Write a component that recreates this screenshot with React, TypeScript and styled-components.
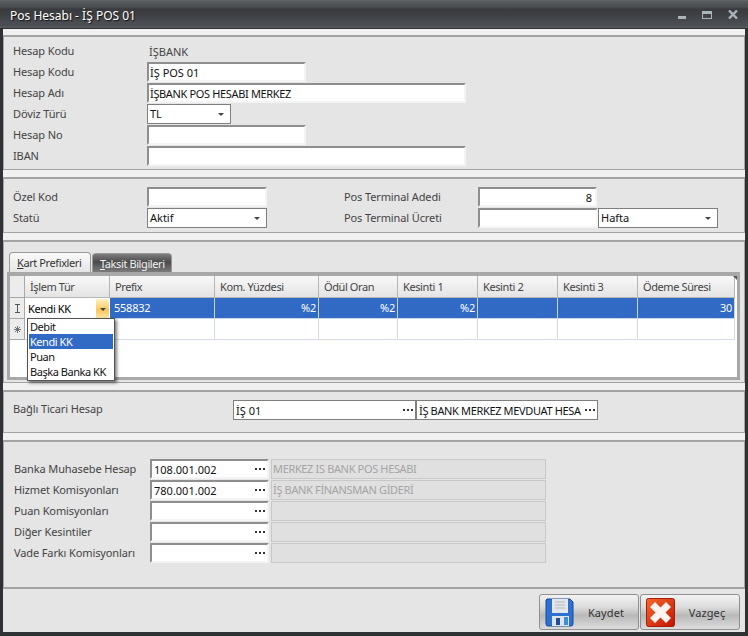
import React from "react";
import styled, { createGlobalStyle } from "styled-components";

const Global = createGlobalStyle`
  * { box-sizing: border-box; }
  html, body { margin: 0; padding: 0; width: 748px; height: 636px; overflow: hidden; background: #333; }
  body { font-family: "Noto Sans", "Liberation Sans", sans-serif; font-size: 11px; color: #000; }
`;

const Window = styled.div`
  width: 748px; height: 636px; display: flex; flex-direction: column;
  background: #2f3133;
  padding: 0 3px 4px 3px;
`;
const TitleBar = styled.div`
  height: 28px; margin: 0 -3px; padding: 0 10px 0 10px;
  display: flex; align-items: center; justify-content: space-between; flex-shrink: 0;
  background: linear-gradient(#64676a 0, #55585b 2px, #4a4c4f 7px, #393b3e 9px, #3d3f42 14px, #4d5155 26px, #55595c 27px);
`;
const Title = styled.div`
  color: #fff; font-size: 12px; margin-top: 2px; text-shadow: 1px 1px 1px #111;
`;
const Controls = styled.div`display: flex; align-items: flex-end; gap: 16px; margin-top: 1px;`;
const Body = styled.div`
  flex: 1; background: #f0f0f0; padding-top: 6px; display: flex; flex-direction: column; margin-top: 1px; gap: 7px; min-height: 0;
`;
const Panel = styled.section<{ $h: number; $pl?: number }>`
  height: ${p => p.$h}px; flex-shrink: 0; background: #e5e5e5;
  border: 1px solid #a3a3a3; border-top-width: 2px;
  padding-left: ${p => p.$pl ?? 9}px;
  display: flex; flex-direction: column;
`;
const Rows = styled.div<{ $top: number }>`
  display: flex; flex-direction: column; gap: 1px; padding-top: ${p => p.$top}px;
`;
const Row = styled.div`display: flex; align-items: center; height: 20px;`;
const Label = styled.label<{ $w: number; $up?: number }>`
  width: ${p => p.$w}px; flex-shrink: 0; color: #444; font-size: 11px; letter-spacing: -0.12px; white-space: nowrap; position: relative; top: ${p => -(p.$up ?? 1)}px;
`;
const Static = styled.span`color: #444; font-size: 11px; margin-left: 2px;`;
const Input = styled.div<{ $w: number; $right?: boolean; $caps?: boolean }>`
  width: ${p => p.$w}px; height: 20px; flex-shrink: 0; background: #fff;
  border: 2px solid; border-color: #8e8e8e #f4f4f4 #f4f4f4 #8e8e8e;
  padding-left: 1px; padding-right: 3px; line-height: 17px; font-size: 11px; color: #111; white-space: nowrap; overflow: hidden;
  letter-spacing: ${p => (p.$caps ? "-0.35px" : "0")};
  text-align: ${p => (p.$right ? "right" : "left")};
`;
const SelectBox = styled.div<{ $w: number }>`
  width: ${p => p.$w}px; height: 20px; flex-shrink: 0; background: #fff; border: 1px solid #7f7f7f;
  display: flex; align-items: center; justify-content: space-between; padding: 0 6px 1px 2px; font-size: 11px; color: #111;
`;
const Arrow = styled.span`
  width: 0; height: 0; border-left: 3px solid transparent; border-right: 3px solid transparent; border-top: 3px solid #444; margin-top: 1px;
`;
const TwoCols = styled.div`display: flex; padding-top: 8px;`;
const Column = styled.div<{ $w: number }>`width: ${p => p.$w}px; display: flex; flex-direction: column; gap: 1px;`;
const Tabs = styled.div`display: flex; padding: 10px 0 0 0; height: 30px; align-items: flex-end; gap: 1px;`;
const Tab = styled.div<{ $active?: boolean }>`
  height: ${p => (p.$active ? 20 : 19)}px; padding: 0 7px; display: flex; align-items: center; font-size: 11px; letter-spacing: -0.4px;
  border: 1px solid #999; border-bottom: 0; border-radius: 4px 4px 0 0;
  width: ${p => (p.$active ? 82 : 80)}px; white-space: nowrap;
  color: ${p => (p.$active ? "#333" : "#f2f2f2")};
  background: ${p => (p.$active ? "linear-gradient(#fafafa,#e5e5e5)" : "linear-gradient(#7d7d7d,#4b4b4b 45%,#7c7c7c)")};
  u { text-underline-offset: 1px; }
`;
const GridFrame = styled.div`
  margin: 0 0 0 -2px; width: 733px; height: 108px; border: 3px solid #a8a8a8; border-top-width: 4px; background: #fff; position: relative; display: flex; flex-direction: column;
`;
const GridRow = styled.div<{ $h: number }>`display: flex; height: ${p => p.$h}px; flex-shrink: 0;`;
const Indicator = styled.div`
  width: 15px; flex-shrink: 0; background: #ececec; border-right: 1px solid #a8a8a8; border-bottom: 1px solid #a8a8a8; display: flex; align-items: center; justify-content: center;
`;
const HeaderCell = styled.div<{ $w: number }>`
  width: ${p => p.$w}px; flex-shrink: 0; padding-left: 5px; display: flex; align-items: center; font-size: 11px; letter-spacing: -0.4px; color: #444;
  background: linear-gradient(#f8f8f8,#e4e4e4); border-right: 1px solid #b5b5b5; border-bottom: 1px solid #b5b5b5;
`;
const Cell = styled.div<{ $w: number; $sel?: boolean }>`
  width: ${p => p.$w}px; flex-shrink: 0; padding: 0 2px 1px 4px; display: flex; align-items: center; font-size: 11px; letter-spacing: -0.25px;
  justify-content: space-between;
  background: ${p => (p.$sel ? "#316ac5" : "#fff")}; color: ${p => (p.$sel ? "#fff" : "#111")};
  border-right: 1px solid ${p => (p.$sel ? "#c9d6ea" : "#d4dbe6")}; border-bottom: 1px solid ${p => (p.$sel ? "#c9d6ea" : "#d4dbe6")};
`;
const NumCell = styled(Cell)`justify-content: flex-end;`;
const EditCell = styled.div<{ $w: number }>`
  width: ${p => p.$w}px; flex-shrink: 0; background: #fff; display: flex; align-items: center; justify-content: space-between; padding: 0 1px 0 3px; font-size: 11px; letter-spacing: -0.4px;
`;
const EditBtn = styled.span`
  width: 13px; height: 20px; background: linear-gradient(#fff3c4,#f9c65a 55%,#fde9a8); display: flex; align-items: center; justify-content: center;
`;
const Corner = styled.span`
  position: absolute; right: 0; top: 0; width: 0; height: 0; border-top: 4px solid #555; border-left: 4px solid transparent;
`;
const Popup = styled.ul`
  position: absolute; left: 17px; top: 42px; width: 88px; height: 63px; margin: 0; padding: 0 1px; list-style: none; background: #fff; border: 1px solid #555;
  box-shadow: 2px 2px 3px rgba(0,0,0,.5); font-size: 11px;
`;
const PopupItem = styled.li<{ $sel?: boolean }>`
  height: 15px; line-height: 15px; padding-left: 1px; letter-spacing: -0.45px; white-space: nowrap;
  background: ${p => (p.$sel ? "#316ac5" : "transparent")}; color: ${p => (p.$sel ? "#fff" : "#111")};
`;
const LookupBox = styled.div<{ $w: number; $inset?: boolean }>`
  width: ${p => p.$w}px; height: 20px; flex-shrink: 0; background: #fff; display: flex; align-items: center; justify-content: space-between;
  padding: 0 2px 0 2px; font-size: 11px; color: #111; white-space: nowrap; overflow: hidden;
  ${p => (p.$inset
    ? "border: 2px solid; border-color: #8e8e8e #f4f4f4 #f4f4f4 #8e8e8e;"
    : "border: 1px solid #7f7f7f;")}
`;
const Clip = styled.span<{ $caps?: boolean }>`overflow: hidden; flex: 1; letter-spacing: ${p => (p.$caps ? "-0.35px" : "0")};`;
const DotsSvg = styled.svg`flex-shrink: 0; margin-left: 2px;`;
const GrayBox = styled.div`
  width: 275px; height: 20px; margin-left: 2px; flex-shrink: 0; background: #e0e0e0; border: 1px solid #c8c8c8; color: #a4a4a4; padding-left: 1px; line-height: 18px; font-size: 11px; white-space: nowrap; letter-spacing: -0.35px;
`;
const Footer = styled.div`
  flex: 1; display: flex; justify-content: flex-end; align-items: flex-start; gap: 1px; padding: 5px 5px 0 0; background: #e5e5e5; margin-top: -7px; border-top: 1px solid #a3a3a3;
`;
const Button = styled.button`
  width: 100px; height: 36px; padding: 0 0 0 5px; display: flex; align-items: center; border: 1px solid #8f8f8f; border-radius: 3px; font: inherit; color: #333; letter-spacing: 0.1px;
  background: linear-gradient(#f3f3f3,#dcdcdc 35%,#b9b9b9 60%,#dcdcdc);
`;
const ButtonText = styled.span`flex: 1; text-align: center;`;

const Minimize = () => <svg width="8" height="3" viewBox="0 0 8 3"><rect width="8" height="3" fill="#aab4bb" /></svg>;
const Maximize = () => <svg width="10" height="8" viewBox="0 0 10 8"><path d="M0 0h10v8H0zM1 3v4h8V3z" fill="#aab4bb" fillRule="evenodd" /></svg>;
const Close = () => <svg width="10" height="9" viewBox="0 0 10 9"><path d="M1 .5 9 8.5M9 .5 1 8.5" stroke="#aab4bb" strokeWidth="2.4" fill="none" /></svg>;
const Dots = () => <DotsSvg width="10" height="2" viewBox="0 0 10 2"><path d="M0 0h2v2H0zM4 0h2v2H4zM8 0h2v2H8z" fill="#333" /></DotsSvg>;
const IBeam = () => <svg width="7" height="9" viewBox="0 0 7 9"><path d="M1 .5h5M1 8.5h5M3.5 .5v8" stroke="#555" fill="none" /></svg>;
const Star = () => <svg width="7" height="7" viewBox="0 0 7 7"><path d="M3.5 0v7M0 3.5h7M1 1l5 5M6 1 1 6" stroke="#666" strokeWidth=".9" fill="none" /></svg>;

const Floppy = () => (
  <svg width="29" height="29" viewBox="0 0 29 29">
    <path d="M2 1h23l3 3v22a2 2 0 0 1-2 2H3a2 2 0 0 1-2-2V2z" fill="#2f6fd0" stroke="#1b4a9a" />
    <rect x="7" y="1" width="16" height="14" fill="#e3e6ea" />
    <path d="M10 4h10M10 7h10M10 10h10" stroke="#b2b7bd" strokeWidth="1.2" />
    <rect x="7" y="18" width="17" height="10" fill="#dfe4ea" />
    <rect x="11" y="20" width="4" height="7" fill="#234e9a" />
    <rect x="19" y="19" width="4" height="8" fill="#3a8fd8" />
  </svg>
);
const CancelIcon = () => (
  <svg width="29" height="29" viewBox="0 0 29 29">
    <defs><linearGradient id="cg" x1="0" y1="0" x2="1" y2="1"><stop offset="0" stopColor="#f66a2a" /><stop offset="1" stopColor="#c01208" /></linearGradient></defs>
    <rect x=".5" y=".5" width="28" height="28" rx="2" fill="url(#cg)" stroke="#a81c08" />
    <path d="M9 4 14.5 9.5 20 4 25 9 19.5 14.5 25 20 20 25 14.5 19.5 9 25 4 20 9.5 14.5 4 9z" fill="#fbf3ee" />
  </svg>
);

const cols: [string, number][] = [["İşlem Tür", 85], ["Prefix", 105], ["Kom. Yüzdesi", 104], ["Ödül Oran", 79], ["Kesinti 1", 80], ["Kesinti 2", 80], ["Kesinti 3", 80], ["Ödeme Süresi", 97]];
const values = ["", "558832", "%2", "%2", "%2", "", "", "30"];
const accounts = [
  ["Banka Muhasebe Hesap", "108.001.002", "MERKEZ IS BANK POS HESABI"],
  ["Hizmet Komisyonları", "780.001.002", "İŞ BANK FİNANSMAN GİDERİ"],
  ["Puan Komisyonları", "", ""],
  ["Diğer Kesintiler", "", ""],
  ["Vade Farkı Komisyonları", "", ""],
];

export default function App() {
  return (
    <Window>
      <Global />
      <TitleBar>
        <Title>Pos Hesabı - İŞ POS 01</Title>
        <Controls><Minimize /><Maximize /><Close /></Controls>
      </TitleBar>
      <Body>
        <Panel $h={135}>
          <Rows $top={4}>
            <Row><Label $w={134}>Hesap Kodu</Label><Static>İŞBANK</Static></Row>
            <Row><Label $w={134}>Hesap Kodu</Label><Input $w={159}>İŞ POS 01</Input></Row>
            <Row><Label $w={134}>Hesap Adı</Label><Input $w={319} $caps>İŞBANK POS HESABI MERKEZ</Input></Row>
            <Row><Label $w={134}>Döviz Türü</Label><SelectBox $w={84}>TL<Arrow /></SelectBox></Row>
            <Row><Label $w={134}>Hesap No</Label><Input $w={159} /></Row>
            <Row><Label $w={134}>IBAN</Label><Input $w={319} /></Row>
          </Rows>
        </Panel>
        <Panel $h={56}>
          <TwoCols>
            <Column $w={331}>
              <Row><Label $w={134}>Özel Kod</Label><Input $w={120} /></Row>
              <Row><Label $w={134}>Statü</Label><SelectBox $w={120}>Aktif<Arrow /></SelectBox></Row>
            </Column>
            <Column $w={380}>
              <Row><Label $w={134}>Pos Terminal Adedi</Label><Input $w={119} $right>8</Input></Row>
              <Row><Label $w={134}>Pos Terminal Ücreti</Label><Input $w={120} /><SelectBox $w={120}>Hafta<Arrow /></SelectBox></Row>
            </Column>
          </TwoCols>
        </Panel>
        <Panel $h={143} $pl={5}>
          <Tabs>
            <Tab $active><span><u>K</u>art Prefixleri</span></Tab>
            <Tab><span><u>T</u>aksit Bilgileri</span></Tab>
          </Tabs>
          <GridFrame>
            <Corner />
            <GridRow $h={22}>
              <Indicator />
              {cols.map(([t, w]) => <HeaderCell key={t} $w={w}>{t}</HeaderCell>)}
            </GridRow>
            <GridRow $h={21}>
              <Indicator><IBeam /></Indicator>
              {cols.map(([t, w], i) => {
                if (i === 0) return (
                  <EditCell key={t} $w={w}>Kendi KK<EditBtn><Arrow /></EditBtn></EditCell>
                );
                const v = values[i];
                return i === 1 ? <Cell key={t} $w={w} $sel>{v}</Cell> : <NumCell key={t} $w={w} $sel>{v}</NumCell>;
              })}
            </GridRow>
            <GridRow $h={21}>
              <Indicator><Star /></Indicator>
              {cols.map(([t, w]) => <Cell key={t} $w={w} />)}
            </GridRow>
            <Popup>
              <PopupItem>Debit</PopupItem>
              <PopupItem $sel>Kendi KK</PopupItem>
              <PopupItem>Puan</PopupItem>
              <PopupItem>Başka Banka KK</PopupItem>
            </Popup>
          </GridFrame>
        </Panel>
        <Panel $h={43}>
          <Rows $top={8}>
            <Row>
              <Label $w={220} $up={2}>Bağlı Ticari Hesap</Label>
              <LookupBox $w={183}><Clip>İŞ 01</Clip><Dots /></LookupBox>
              <LookupBox $w={182}><Clip $caps>İŞ BANK MERKEZ MEVDUAT HESA</Clip><Dots /></LookupBox>
            </Row>
          </Rows>
        </Panel>
        <Panel $h={148} $pl={10}>
          <Rows $top={17}>
            {accounts.map(([l, c, n]) => (
              <Row key={l}>
                <Label $w={136}>{l}</Label>
                <LookupBox $w={119} $inset><Clip>{c}</Clip><Dots /></LookupBox>
                <GrayBox>{n}</GrayBox>
              </Row>
            ))}
          </Rows>
        </Panel>
        <Footer>
          <Button><Floppy /><ButtonText>Kaydet</ButtonText></Button>
          <Button><CancelIcon /><ButtonText>Vazgeç</ButtonText></Button>
        </Footer>
      </Body>
    </Window>
  );
}
